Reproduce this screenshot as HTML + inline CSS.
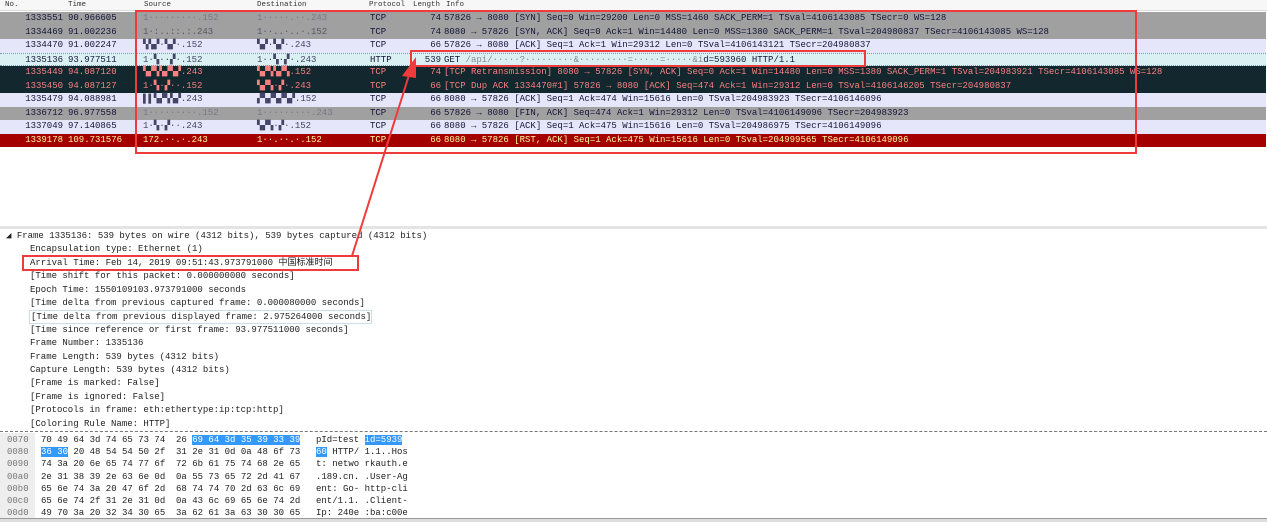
<!DOCTYPE html>
<html><head><meta charset="utf-8"><style>
*{margin:0;padding:0;box-sizing:border-box}
body{width:1267px;height:522px;background:#fff;position:relative;overflow:hidden;font-family:"Liberation Mono","DejaVu Sans Mono","Noto Sans CJK SC",monospace;font-size:9px;color:#222}
.hdr{position:absolute;left:0;top:0;width:1267px;height:11px;background:#f7f7f7;border-bottom:1px solid #ddd;font-size:7.5px;color:#333}
.hdr span{position:absolute;top:1px}
.row{position:absolute;left:0;width:1266px;height:13.5px;line-height:13.5px;white-space:pre}
.row span{position:absolute;top:0}
.no{left:0;width:63px;text-align:right}
.len{left:410px;width:31px;text-align:right}
.g{background:#a0a0a0;color:#15153a}
.l{background:#e6e6fa;color:#15153a}
.s{background:#dbf0f2;color:#15153a;border-top:1px dotted #7a9fb0;border-bottom:1px dotted #7a9fb0}
.d{background:#12272e;color:#f78080}
.r{background:#a40000;color:#fffc9c}
.det{position:absolute;left:0;top:226px;width:1267px;height:205px;border-top:3px solid #e4e4e4}
.dl{position:absolute;left:30px;height:13.5px;line-height:13.5px;white-space:pre;color:#222}
.hex{position:absolute;left:0;top:431px;width:1267px;height:87px;border-top:1px dashed #777;background:#fff;overflow:hidden}
.hr{position:absolute;line-height:12.2px;white-space:pre}
.off{position:absolute;left:0;top:1px;width:35px;height:86px;background:#eee}
.box{position:absolute;border:2px solid #ef3b3b}
.hl{background:#3399ff;color:#fff}
</style></head><body>
<div class="hdr"><span style="left:5px">No.</span><span style="left:68px">Time</span><span style="left:144px">Source</span><span style="left:257px">Destination</span><span style="left:369px">Protocol</span><span style="left:413px">Length</span><span style="left:446px">Info</span></div>
<div style="position:absolute;left:7px;top:17px;width:6px;height:123px;border-left:1px solid #888"></div>

<div class="row g" style="top:12px"><span class="no">1333551</span><span style="left:68px">90.966605</span><span style="left:143px;color:#778">1·········.152</span><span style="left:257px;color:#778">1·····.··.243</span><span style="left:370px">TCP</span><span class="len">74</span><span style="left:444px">57826 → 8080 [SYN] Seq=0 Win=29200 Len=0 MSS=1460 SACK_PERM=1 TSval=4106143085 TSecr=0 WS=128</span></div>
<div class="row g" style="top:25.5px"><span class="no">1334469</span><span style="left:68px">91.002236</span><span style="left:143px;color:#556">1·:..::.:.243</span><span style="left:257px;color:#556">1··..·..·.152</span><span style="left:370px">TCP</span><span class="len">74</span><span style="left:444px">8080 → 57826 [SYN, ACK] Seq=0 Ack=1 Win=14480 Len=0 MSS=1380 SACK_PERM=1 TSval=204980837 TSecr=4106143085 WS=128</span></div>
<div class="row l" style="top:39px"><span class="no">1334470</span><span style="left:68px">91.002247</span><span style="left:143px;color:#446">▚▚▞·▚▞·.152</span><span style="left:257px;color:#446">▚▞·▚▞·.243</span><span style="left:370px">TCP</span><span class="len">66</span><span style="left:444px">57826 → 8080 [ACK] Seq=1 Ack=1 Win=29312 Len=0 TSval=4106143121 TSecr=204980837</span></div>
<div class="row s" style="top:52.5px"><span class="no">1335136</span><span style="left:68px">93.977511</span><span style="left:143px;color:#446">1·▚··▞·.152</span><span style="left:257px;color:#446">1··▚·▞·.243</span><span style="left:370px">HTTP</span><span class="len">539</span><span style="left:444px">GET <span style="position:static;color:#889">/api/·····?·········&amp;·········=·····=·····&amp;i</span>d=593960 HTTP/1.1</span></div>
<div class="row d" style="top:66px"><span class="no">1335449</span><span style="left:68px">94.087120</span><span style="left:143px">▚▞▚▚▞▚▞.243</span><span style="left:257px">▚▞▚▚▞▚.152</span><span style="left:370px">TCP</span><span class="len">74</span><span style="left:444px">[TCP Retransmission] 8080 → 57826 [SYN, ACK] Seq=0 Ack=1 Win=14480 Len=0 MSS=1380 SACK_PERM=1 TSval=204983921 TSecr=4106143085 WS=128</span></div>
<div class="row d" style="top:79.5px"><span class="no">1335450</span><span style="left:68px">94.087127</span><span style="left:143px">1·▚·▞··.152</span><span style="left:257px">▚▞▚·▞·.243</span><span style="left:370px">TCP</span><span class="len">66</span><span style="left:444px">[TCP Dup ACK 1334470#1] 57826 → 8080 [ACK] Seq=474 Ack=1 Win=29312 Len=0 TSval=4106146205 TSecr=204980837</span></div>
<div class="row l" style="top:93px"><span class="no">1335479</span><span style="left:68px">94.088981</span><span style="left:143px;color:#446">▌▌▚▞▚▚▞.243</span><span style="left:257px;color:#446">▞▚▞▚▞▚▞.152</span><span style="left:370px">TCP</span><span class="len">66</span><span style="left:444px">8080 → 57826 [ACK] Seq=1 Ack=474 Win=15616 Len=0 TSval=204983923 TSecr=4106146096</span></div>
<div class="row g" style="top:106.5px"><span class="no">1336712</span><span style="left:68px">96.977558</span><span style="left:143px;color:#778">1·········.152</span><span style="left:257px;color:#778">1·········.243</span><span style="left:370px">TCP</span><span class="len">66</span><span style="left:444px">57826 → 8080 [FIN, ACK] Seq=474 Ack=1 Win=29312 Len=0 TSval=4106149096 TSecr=204983923</span></div>
<div class="row l" style="top:120px"><span class="no">1337049</span><span style="left:68px">97.140865</span><span style="left:143px;color:#446">1·▚·▞··.243</span><span style="left:257px;color:#446">▚▞▚·▞·.152</span><span style="left:370px">TCP</span><span class="len">66</span><span style="left:444px">8080 → 57826 [ACK] Seq=1 Ack=475 Win=15616 Len=0 TSval=204986975 TSecr=4106149096</span></div>
<div class="row r" style="top:133.5px"><span class="no">1339178</span><span style="left:68px">109.731576</span><span style="left:143px">172.··.·.243</span><span style="left:257px">1··.··.·.152</span><span style="left:370px">TCP</span><span class="len">66</span><span style="left:444px">8080 → 57826 [RST, ACK] Seq=1 Ack=475 Win=15616 Len=0 TSval=204999565 TSecr=4106149096</span></div>

<div class="det">
<div class="dl" style="left:6px;top:1px">◢ Frame 1335136: 539 bytes on wire (4312 bits), 539 bytes captured (4312 bits)</div>
<div class="dl" style="top:14.4px">Encapsulation type: Ethernet (1)</div>
<div class="dl" style="top:27.8px">Arrival Time: Feb 14, 2019 09:51:43.973791000 中国标准时间</div>
<div class="dl" style="top:41.2px">[Time shift for this packet: 0.000000000 seconds]</div>
<div class="dl" style="top:54.6px">Epoch Time: 1550109103.973791000 seconds</div>
<div class="dl" style="top:68px">[Time delta from previous captured frame: 0.000080000 seconds]</div>
<div class="dl" style="top:81.4px;left:29px;border:1px solid #cde;padding-left:1px">[Time delta from previous displayed frame: 2.975264000 seconds]</div>
<div class="dl" style="top:94.8px">[Time since reference or first frame: 93.977511000 seconds]</div>
<div class="dl" style="top:108.2px">Frame Number: 1335136</div>
<div class="dl" style="top:121.6px">Frame Length: 539 bytes (4312 bits)</div>
<div class="dl" style="top:135px">Capture Length: 539 bytes (4312 bits)</div>
<div class="dl" style="top:148.4px">[Frame is marked: False]</div>
<div class="dl" style="top:161.8px">[Frame is ignored: False]</div>
<div class="dl" style="top:175.2px">[Protocols in frame: eth:ethertype:ip:tcp:http]</div>
<div class="dl" style="top:188.6px;height:13px;overflow:hidden">[Coloring Rule Name: HTTP]</div>
</div>

<div class="hex">
<div class="off"></div>
<div class="hr" style="left:7px;top:2px;color:#777">0070
0080
0090
00a0
00b0
00c0
00d0</div>
<div class="hr" style="left:41px;top:2px">70 49 64 3d 74 65 73 74  26 <span class="hl">69 64 3d 35 39 33 39</span>
<span class="hl">36 30</span> 20 48 54 54 50 2f  31 2e 31 0d 0a 48 6f 73
74 3a 20 6e 65 74 77 6f  72 6b 61 75 74 68 2e 65
2e 31 38 39 2e 63 6e 0d  0a 55 73 65 72 2d 41 67
65 6e 74 3a 20 47 6f 2d  68 74 74 70 2d 63 6c 69
65 6e 74 2f 31 2e 31 0d  0a 43 6c 69 65 6e 74 2d
49 70 3a 20 32 34 30 65  3a 62 61 3a 63 30 30 65</div>
<div class="hr" style="left:316px;top:2px">pId=test <span class="hl">id=5939</span>
<span class="hl">60</span> HTTP/ 1.1..Hos
t: netwo rkauth.e
.189.cn. .User-Ag
ent: Go- http-cli
ent/1.1. .Client-
Ip: 240e :ba:c00e</div>
</div>
<div style="position:absolute;left:0;top:518px;width:1267px;height:4px;background:#ddd;border-top:1px solid #999"></div>

<div class="box" style="left:135px;top:10px;width:1002px;height:144px"></div>
<div class="box" style="left:410px;top:50px;width:456px;height:17px"></div>
<div class="box" style="left:22px;top:255px;width:337px;height:16px"></div>
<svg style="position:absolute;left:0;top:0" width="1267" height="522"><line x1="352" y1="256" x2="410" y2="72" stroke="#ef3b3b" stroke-width="2"/><polygon points="416,57 402,76 416,78" fill="#ef3b3b"/></svg>
</body></html>
